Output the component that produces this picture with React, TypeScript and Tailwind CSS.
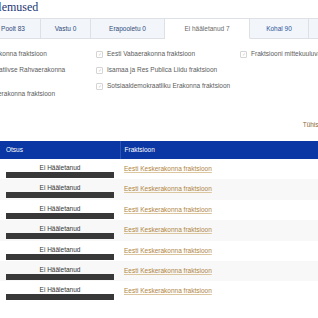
import React from 'react';

const tabs = [
  { label: 'Poolt 83', w: 'w-[56px]', active: false, color: 'text-[#2f4b7c]' },
  { label: 'Vastu 0', w: 'w-[50px]', active: false, color: 'text-[#2f4b7c]' },
  { label: 'Erapooletu 0', w: 'w-[74px]', active: false, color: 'text-[#2f4b7c]' },
  { label: 'Ei hääletanud 7', w: 'w-[85px]', active: true, color: 'text-[#6a6a6a]' },
  { label: 'Kohal 90', w: 'w-[59px]', active: false, color: 'text-[#2a55a0]' },
  { label: 'Puudu 11', w: 'w-[60px]', active: false, color: 'text-[#2a55a0]' },
];

const columns = [
  ['Eesti Keskerakonna fraktsioon', 'Eesti Konservatiivse Rahvaerakonna fraktsioon', 'Eesti Reformierakonna fraktsioon'],
  ['Eesti Vabaerakonna fraktsioon', 'Isamaa ja Res Publica Liidu fraktsioon', 'Sotsiaaldemokraatliku Erakonna fraktsioon'],
  ['Fraktsiooni mittekuuluvad Riigikogu liikmed'],
];

const rows = Array.from({ length: 7 }, (_, i) => ({
  id: i,
  decision: 'Ei Hääletanud',
  faction: 'Eesti Keskerakonna fraktsioon',
}));

function Checkbox() {
  return (
    <span className="mt-[1px] flex h-[7px] w-[7px] shrink-0 items-center justify-center rounded-[1px] border border-[#d4d4d4] bg-white text-[5px] leading-none text-[#cbcbcb]">
      ✓
    </span>
  );
}

export default function App() {
  return (
    <div className="h-[318px] w-[318px] overflow-hidden bg-white font-['Liberation_Sans',Arial,sans-serif]">
      <h1 className="-ml-[53px] whitespace-nowrap pt-[1px] font-['Liberation_Serif',serif] text-[12px] leading-[13px] text-[#1d3573]">
        Hääletustulemused
      </h1>

      <div className="-ml-[15px] mt-[4px] flex h-[21px] whitespace-nowrap">
        {tabs.map((tab) => (
          <div
            key={tab.label}
            className={`${tab.w} flex shrink-0 items-center justify-center border border-l-0 first:border-l text-[6.5px] ${tab.color} ${
              tab.active ? 'border-[#dde1e6] border-b-white bg-white' : 'border-[#dde1e6] bg-[#f2f5f9]'
            }`}
          >
            {tab.label}
          </div>
        ))}
      </div>

      <div className="-ml-[52px] mt-[11px] grid grid-cols-[148px_144px_144px]">
        {columns.map((col, ci) => (
          <div key={ci} className="flex flex-col gap-[8px]">
            {col.map((label) => (
              <div key={label} className="flex items-start gap-[4px]">
                <Checkbox />
                <span className="w-[128px] text-[6.5px] leading-[8px] text-[#5c5c5c]">{label}</span>
              </div>
            ))}
          </div>
        ))}
      </div>

      <div className="mt-[23px] flex justify-end whitespace-nowrap">
        <span className="-mr-[6px] text-[6.5px] leading-[8px] text-[#8a6a35]">Tühista</span>
      </div>

      <table className="mt-[12px] w-[330px] border-collapse text-[6.5px]">
        <thead>
          <tr className="h-[18px] bg-[#0a37a3] text-left text-white">
            <th className="w-[120px] border-r border-[#2c52b2] px-[6px] font-normal">Otsus</th>
            <th className="px-[4px] font-normal">Fraktsioon</th>
          </tr>
        </thead>
        <tbody>
          {rows.map((row) => (
            <tr key={row.id} className={`h-[20.4px] ${row.id % 2 === 1 ? 'bg-[#f8f8f8]' : 'bg-white'}`}>
              <td className="px-[6px] pt-[4px] align-top">
                <div className="text-center leading-[9px] text-[#333]">{row.decision}</div>
                <div className="h-[6px] bg-[#383838]"></div>
              </td>
              <td className="px-[4px] pt-[5px] align-top">
                <a className="text-[#b0843f] underline decoration-[#dcc69f]">{row.faction}</a>
              </td>
            </tr>
          ))}
        </tbody>
      </table>
    </div>
  );
}
